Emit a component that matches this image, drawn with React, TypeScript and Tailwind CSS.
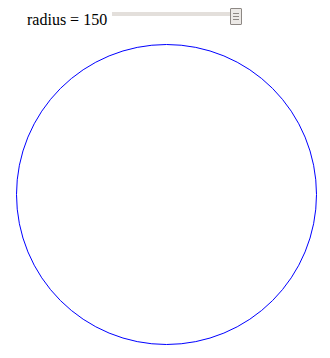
export default function App() {
    const radius = 150

    return (
        <div className="h-[358px] w-[330px] bg-white">
            <div className="flex h-[36px] items-start pl-[27px]">
                <span className="mt-[11px] font-['Liberation_Serif',serif] text-[16px] leading-[18px] text-black">
                    radius = {radius}
                </span>
                <div className="relative ml-[5px] mt-[8px] h-[17px] w-[130px]">
                    <div className="mt-[4px] h-[4px] w-[124px] bg-[#e3dfdb]"></div>
                    <div className="absolute right-0 top-0 flex h-[17px] w-[12px] flex-col items-center justify-center gap-[2px] rounded-[1px] border border-[#8d8884] bg-[#ece9e6]">
                        <div className="h-px w-[6px] bg-[#8d8884]"></div>
                        <div className="h-px w-[6px] bg-[#8d8884]"></div>
                        <div className="h-px w-[6px] bg-[#8d8884]"></div>
                    </div>
                </div>
            </div>
            <svg width="330" height="322" className="block">
                <circle cx="166.5" cy="158.5" r={radius} fill="none" stroke="blue" strokeWidth="1" />
            </svg>
        </div>
    )
}
